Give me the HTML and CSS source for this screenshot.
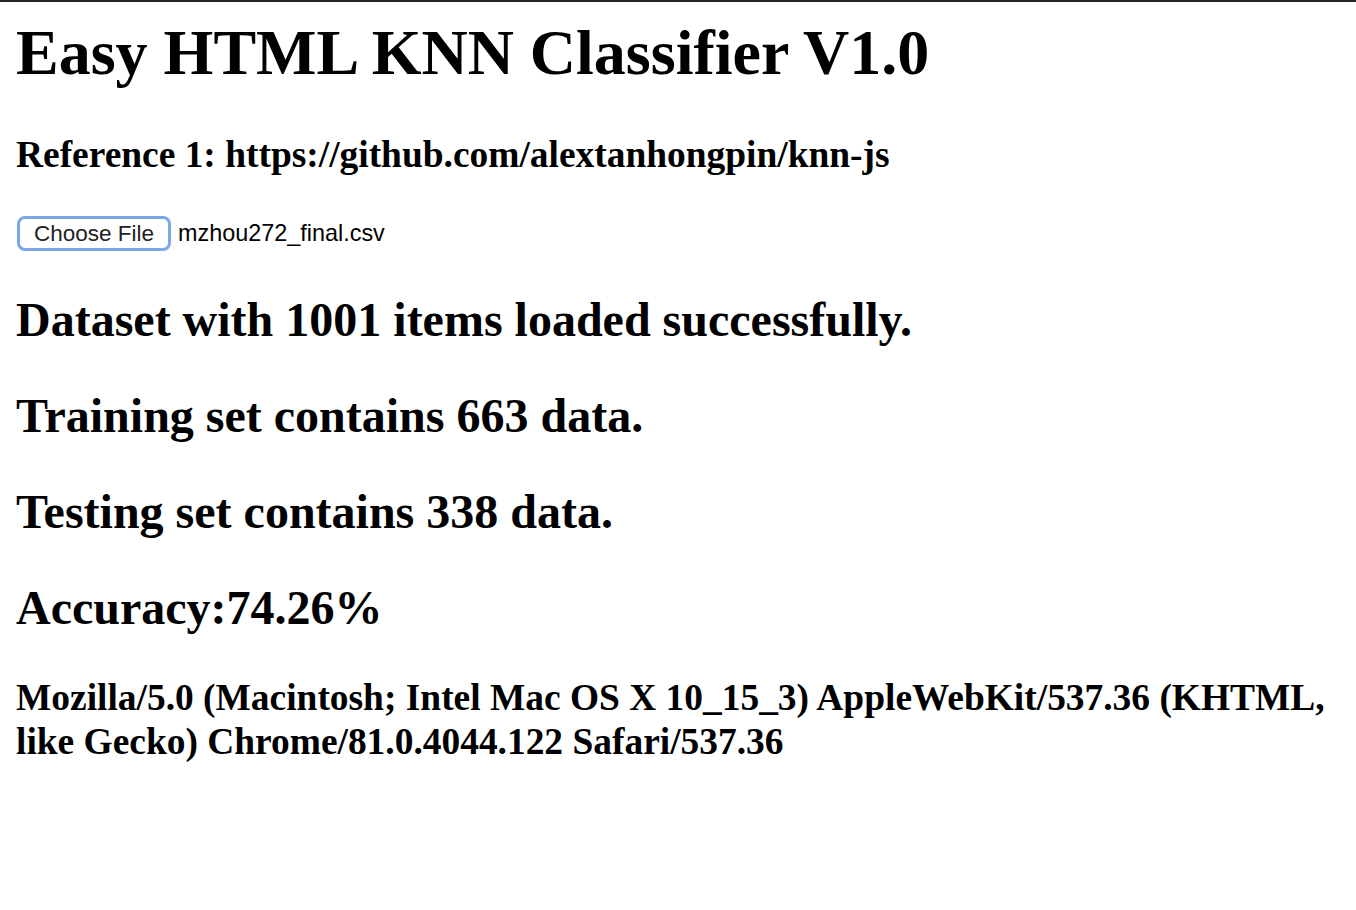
FILE: index.html
```html
<!DOCTYPE html>
<html>
<head>
<meta charset="utf-8">
<title>Easy HTML KNN Classifier V1.0</title>
<link rel="stylesheet" href="styles.css">
</head>
<body>
<h1 class="title">Easy HTML KNN Classifier V1.0</h1>
<h3 class="sub">Reference 1: https://github.com/alextanhongpin/knn-js</h3>
<div class="file-row">
  <button class="file-btn" type="button">Choose File</button>
  <span class="file-name">mzhou272_final.csv</span>
</div>
<h2 class="stat">Dataset with 1001 items loaded successfully.</h2>
<h2 class="stat">Training set contains 663 data.</h2>
<h2 class="stat">Testing set contains 338 data.</h2>
<h2 class="stat">Accuracy:74.26%</h2>
<h3 class="sub ua">Mozilla/5.0 (Macintosh; Intel Mac OS X 10_15_3) AppleWebKit/537.36 (KHTML, like Gecko) Chrome/81.0.4044.122 Safari/537.36</h3>
</body>
</html>
```
FILE: styles.css
```css
html {
  border-top: 2px solid #262626;
  background: #fff;
}
body {
  margin: 0 16px 16px 16px;
  font-family: "Liberation Serif", "Times New Roman", serif;
  color: #000;
}
.title {
  font-size: 64px;
  font-weight: bold;
  margin: 14px 0 42.88px 0;
}
.sub {
  font-size: 37.44px;
  font-weight: bold;
  margin: 37.44px 0;
}
.ua {
  line-height: 44px;
}
.stat {
  font-size: 48px;
  font-weight: bold;
  line-height: 56px;
  margin: 40px 0;
}
.file-row {
  display: flex;
  align-items: center;
  gap: 7px;
  padding-top: 3px;
  padding-bottom: 1px;
  font-family: "Liberation Sans", Arial, sans-serif;
}
.file-btn {
  font-family: "Liberation Sans", Arial, sans-serif;
  font-size: 22.5px;
  color: #222;
  background: #fff;
  border: 3px solid #7ba6e9;
  border-radius: 8px;
  height: 35px;
  padding: 0 14px;
  margin: 0 0 0 1px;
  line-height: 1;
}
.file-name {
  font-size: 23.4px;
  color: #000;
}
```
